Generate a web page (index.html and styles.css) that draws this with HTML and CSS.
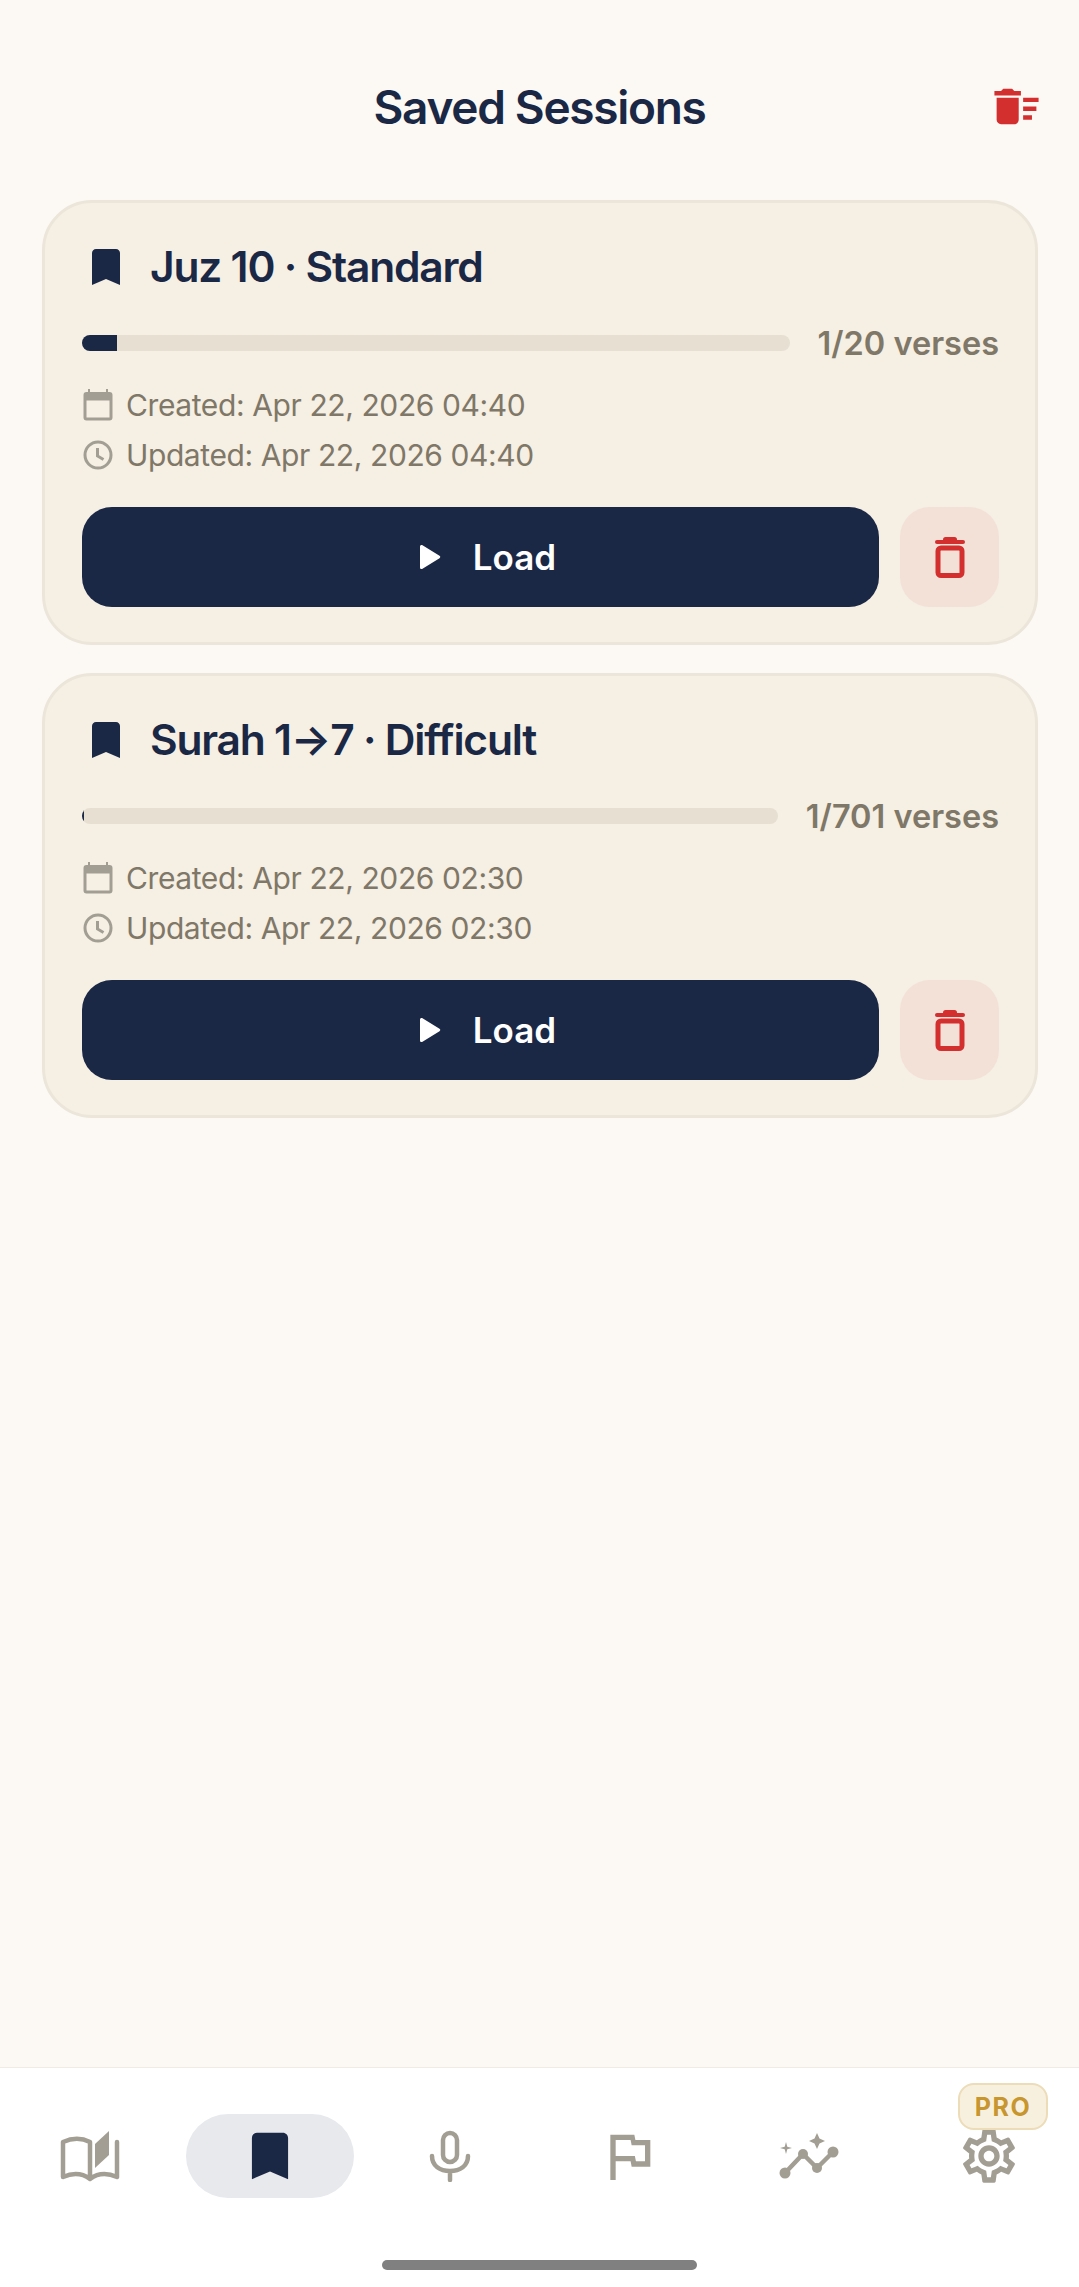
FILE: index.html
```html
<!DOCTYPE html>
<html lang="en">
<head>
    <meta charset="utf-8" />
    <meta name="viewport" content="width=device-width, initial-scale=1" />
    <title>Saved Sessions</title>
    <link rel="stylesheet" href="styles.css">
</head>
<body>
    <header class="top-bar">
        <span></span>
        <h1>Saved Sessions</h1>
        <button class="clear-btn" type="button" aria-label="Delete all">
            <svg width="53" height="53" viewBox="0 0 24 24"><path d="M15 16h4v2h-4zm0-8h7v2h-7zm0 4h6v2h-6zM3 18c0 1.1.9 2 2 2h6c1.1 0 2-.9 2-2V8H3v10zM14 5h-3l-1-1H6L5 5H2v2h12z"/></svg>
        </button>
    </header>

    <main class="session-list">
        <section class="card">
            <div class="card-title">
                <svg width="48" height="48" viewBox="0 0 24 24"><path d="M17 3H7c-1.1 0-2 .9-2 2v16l7-3 7 3V5c0-1.1-.9-2-2-2z"/></svg>
                <h2>Juz 10 · Standard</h2>
            </div>
            <div class="progress-row">
                <div class="progress"><div class="progress-fill" style="width: 5%"></div></div>
                <span class="progress-label">1/20 verses</span>
            </div>
            <div class="meta-row">
                <svg class="meta-icon" width="32" height="32" viewBox="0 0 32 32"><path class="cal" d="M6 0v3H4.500A3 3 0 0 0 1.500 6V28.500a3 3 0 0 0 3 3h23a3 3 0 0 0 3-3V6a3 3 0 0 0-3-3H26V0h-2v3H8V0zM4.500 11.500h23v17h-23z"/></svg>
                <span>Created: Apr 22, 2026 04:40</span>
            </div>
            <div class="meta-row">
                <svg class="meta-icon" width="32" height="32" viewBox="0 0 32 32"><circle class="clock" cx="16" cy="16" r="13"/><path class="clock" d="M15.500 9v8l6 3.500"/></svg>
                <span>Updated: Apr 22, 2026 04:40</span>
            </div>
            <div class="actions">
                <button class="load-btn" type="button">
                    <svg width="22" height="26" viewBox="0 0 22 26"><path d="M1 2.500C1 1 2.500.5 3.500 1.200L20.500 11.800C21.500 12.500 21.500 13.500 20.500 14.200L3.500 24.800C2.500 25.500 1 25 1 23.500z"/></svg>
                    <span>Load</span>
                </button>
                <button class="delete-btn" type="button" aria-label="Delete">
                    <svg width="32" height="42" viewBox="0 0 32 42">
                        <rect class="lid" x="9" y="1" width="14" height="5" rx="2.500"/>
                        <rect class="lid" x="1" y="4" width="30" height="4" rx="2"/>
                        <rect class="bin" x="4" y="12" width="24" height="27.500" rx="3"/>
                    </svg>
                </button>
            </div>
        </section>

        <section class="card">
            <div class="card-title">
                <svg width="48" height="48" viewBox="0 0 24 24"><path d="M17 3H7c-1.1 0-2 .9-2 2v16l7-3 7 3V5c0-1.1-.9-2-2-2z"/></svg>
                <h2>Surah 1→7 · Difficult</h2>
            </div>
            <div class="progress-row">
                <div class="progress"><div class="progress-fill" style="width: 0.3%"></div></div>
                <span class="progress-label">1/701 verses</span>
            </div>
            <div class="meta-row">
                <svg class="meta-icon" width="32" height="32" viewBox="0 0 32 32"><path class="cal" d="M6 0v3H4.500A3 3 0 0 0 1.500 6V28.500a3 3 0 0 0 3 3h23a3 3 0 0 0 3-3V6a3 3 0 0 0-3-3H26V0h-2v3H8V0zM4.500 11.500h23v17h-23z"/></svg>
                <span>Created: Apr 22, 2026 02:30</span>
            </div>
            <div class="meta-row">
                <svg class="meta-icon" width="32" height="32" viewBox="0 0 32 32"><circle class="clock" cx="16" cy="16" r="13"/><path class="clock" d="M15.500 9v8l6 3.500"/></svg>
                <span>Updated: Apr 22, 2026 02:30</span>
            </div>
            <div class="actions">
                <button class="load-btn" type="button">
                    <svg width="22" height="26" viewBox="0 0 22 26"><path d="M1 2.500C1 1 2.500.5 3.500 1.200L20.500 11.800C21.500 12.500 21.500 13.500 20.500 14.200L3.500 24.800C2.500 25.500 1 25 1 23.500z"/></svg>
                    <span>Load</span>
                </button>
                <button class="delete-btn" type="button" aria-label="Delete">
                    <svg width="32" height="42" viewBox="0 0 32 42">
                        <rect class="lid" x="9" y="1" width="14" height="5" rx="2.500"/>
                        <rect class="lid" x="1" y="4" width="30" height="4" rx="2"/>
                        <rect class="bin" x="4" y="12" width="24" height="27.500" rx="3"/>
                    </svg>
                </button>
            </div>
        </section>
    </main>

    <nav class="bottom-nav">
        <div class="nav-items">
            <div class="nav-item">
                <svg width="60" height="52" viewBox="0 0 60 52">
                    <path class="line" d="M30 49V12C22 8 12 8 3 12V47C12 43 22 43 30 49C38 43 48 43 57 47V12"/>
                    <path class="solid" d="M35 14L49 1V25L35 38z"/>
                </svg>
            </div>
            <div class="nav-item">
                <div class="nav-pill">
                    <svg width="62" height="62" viewBox="0 0 24 24"><path d="M17 3H7c-1.1 0-2 .9-2 2v16l7-3 7 3V5c0-1.1-.9-2-2-2z"/></svg>
                </div>
            </div>
            <div class="nav-item">
                <svg width="42" height="52" viewBox="0 0 42 52">
                    <rect class="line" x="14" y="3" width="14" height="29" rx="7"/>
                    <path class="line" d="M3 26C3 36 11 41 21 41S39 36 39 26M21 41V50"/>
                </svg>
            </div>
            <div class="nav-item">
                <svg width="64" height="64" viewBox="0 0 24 24"><path class="solid" d="M14.400 6L14 4H5v17h2v-7h5.600l.4 2h7V6h-5.600zm3.600 8h-3.400l-.4-2H7V6h5.600l.4 2H18v6z"/></svg>
            </div>
            <div class="nav-item">
                <svg width="60" height="50" viewBox="0 0 60 50">
                    <path class="line" d="M6 42L24 23L38 37L54 21"/>
                    <circle class="solid" cx="6" cy="42" r="5.500"/>
                    <circle class="solid" cx="24" cy="23" r="5"/>
                    <circle class="solid" cx="38" cy="37" r="5"/>
                    <circle class="solid" cx="54" cy="21" r="5.500"/>
                    <path class="solid" d="M38 2L40.500 7.500L46 10L40.500 12.500L38 18L35.500 12.500L30 10L35.500 7.500z"/>
                    <path class="solid" d="M7 11L8.300 15.700L13 17L8.300 18.300L7 23L5.700 18.300L1 17L5.700 15.700z"/>
                </svg>
            </div>
            <div class="nav-item">
                <svg width="64" height="64" viewBox="0 0 24 24"><path class="solid" d="M19.430 12.980c.04-.32.07-.64.07-.98 0-.34-.03-.66-.07-.98l2.110-1.650c.19-.15.24-.42.12-.64l-2-3.460c-.09-.16-.26-.25-.44-.25-.06 0-.12.01-.17.03l-2.490 1c-.52-.4-1.080-.73-1.690-.98l-.38-2.650C14.460 2.180 14.250 2 14 2h-4c-.25 0-.46.18-.49.42l-.38 2.650c-.61.25-1.170.59-1.690.98l-2.490-1c-.06-.02-.12-.03-.18-.03-.17 0-.34.09-.43.25l-2 3.460c-.13.22-.07.49.12.64l2.110 1.650c-.04.32-.07.65-.07.98 0 .33.03.66.07.98l-2.110 1.650c-.19.15-.24.42-.12.64l2 3.460c.09.16.26.25.44.25.06 0 .12-.01.17-.03l2.490-1c.52.4 1.080.73 1.690.98l.38 2.650c.03.24.24.42.49.42h4c.25 0 .46-.18.49-.42l.38-2.650c.61-.25 1.170-.59 1.690-.98l2.490 1c.06.02.12.03.18.03.17 0 .34-.09.43-.25l2-3.460c.12-.22.07-.49-.12-.64l-2.110-1.650zm-1.980-1.710c.04.31.05.52.05.73 0 .21-.02.43-.05.73l-.14 1.130.89.7 1.080.84-.7 1.210-1.270-.51-1.040-.42-.9.68c-.43.32-.84.56-1.250.73l-1.060.43-.16 1.130-.2 1.350h-1.400l-.19-1.350-.16-1.130-1.060-.43c-.43-.18-.83-.41-1.230-.71l-.91-.7-1.060.43-1.270.51-.7-1.210 1.080-.84.89-.7-.14-1.130c-.03-.31-.05-.54-.05-.74s.02-.43.05-.73l.14-1.130-.89-.7-1.080-.84.7-1.210 1.270.51 1.040.42.9-.68c.43-.32.84-.56 1.250-.73l1.060-.43.16-1.130.2-1.350h1.390l.19 1.350.16 1.130 1.060.43c.43.18.83.41 1.230.71l.91.7 1.060-.43 1.270-.51.7 1.210-1.070.85-.89.7.14 1.130zM12 8c-2.210 0-4 1.790-4 4s1.790 4 4 4 4-1.790 4-4-1.790-4-4-4zm0 6c-1.100 0-2-.9-2-2s.9-2 2-2 2 .9 2 2-.9 2-2 2z"/></svg>
                <span class="pro-badge">PRO</span>
            </div>
        </div>
        <div class="home-bar"></div>
    </nav>
</body>
</html>
```

FILE: styles.css
```css
* {
    box-sizing: border-box;
}

body {
    font-family: 'Inter', 'Liberation Sans', sans-serif;
    background-color: #fcf9f4;
    color: #1b2845;
    margin: 0;
    height: 2287px;
    display: flex;
    flex-direction: column;
}

h1,
h2 {
    margin: 0;
    font-weight: 600;
}

button {
    border: none;
    font-family: inherit;
    padding: 0;
}

.top-bar {
    height: 200px;
    padding: 13px 36px 0;
    display: grid;
    grid-template-columns: 1fr auto 1fr;
    align-items: center;
}

.top-bar h1 {
    font-size: 46px;
    line-height: 54px;
    letter-spacing: -1.3px;
}

.clear-btn {
    justify-self: end;
    background: none;
    height: 53px;
}

.clear-btn svg {
    fill: #d32f2f;
    display: block;
}

.session-list {
    flex: 1;
    padding: 0 41px 0 42px;
    display: flex;
    flex-direction: column;
    gap: 28px;
}

.card {
    background-color: #f5efe4;
    border: 3px solid #ebe5da;
    border-radius: 50px;
    padding: 37px 36px 35px 37px;
}

.card-title {
    height: 54px;
    display: flex;
    align-items: center;
    gap: 20px;
}

.card-title svg {
    fill: #1b2845;
    flex-shrink: 0;
}

.card-title h2 {
    font-size: 42.5px;
    line-height: 54px;
    letter-spacing: -1.2px;
}

.progress-row {
    height: 40px;
    margin-top: 29px;
    margin-bottom: 17px;
    display: flex;
    align-items: center;
    gap: 28px;
}

.progress {
    flex: 1;
    height: 16px;
    background-color: #e6dfd2;
    border-radius: 8px;
    overflow: hidden;
}

.progress-fill {
    height: 100%;
    background-color: #1b2845;
}

.progress-label {
    font-size: 32.5px;
    font-weight: 600;
    color: #7f7767;
    white-space: nowrap;
}

.meta-row {
    height: 50px;
    display: flex;
    align-items: center;
    gap: 12px;
    font-size: 30px;
    letter-spacing: -0.4px;
    color: #7f7767;
}

.meta-icon {
    flex-shrink: 0;
}

.cal {
    fill: #a39e93;
    fill-rule: evenodd;
}

.clock {
    fill: none;
    stroke: #a39e93;
    stroke-width: 3;
}

.actions {
    margin-top: 27px;
    height: 100px;
    display: flex;
    gap: 21px;
}

.load-btn {
    flex: 1;
    background-color: #1b2845;
    color: #fff;
    border-radius: 30px;
    font-size: 35px;
    font-weight: 600;
    padding-left: 14px;
    display: flex;
    align-items: center;
    justify-content: center;
    gap: 32px;
}

.load-btn svg {
    fill: #fff;
}

.delete-btn {
    width: 99px;
    background-color: #f3e1d7;
    border-radius: 30px;
    display: flex;
    align-items: center;
    justify-content: center;
}

.lid {
    fill: #d32f2f;
}

.bin {
    fill: none;
    stroke: #d32f2f;
    stroke-width: 5;
}

.bottom-nav {
    height: 220px;
    background-color: #fff;
    border-top: 1px solid #f0ebe4;
    padding-top: 46px;
}

.nav-items {
    height: 84px;
    display: flex;
}

.nav-item {
    flex: 1;
    position: relative;
    display: flex;
    align-items: center;
    justify-content: center;
}

.nav-pill {
    width: 168px;
    height: 84px;
    background-color: #e8e9ed;
    border-radius: 42px;
    display: flex;
    align-items: center;
    justify-content: center;
}

.nav-pill svg {
    fill: #1b2845;
}

.line {
    fill: none;
    stroke: #a39e93;
    stroke-width: 4.5;
    stroke-linecap: round;
    stroke-linejoin: round;
}

.solid {
    fill: #a39e93;
}

.pro-badge {
    position: absolute;
    top: -31px;
    right: 31px;
    width: 90px;
    height: 47px;
    background-color: #f8f0df;
    border: 2px solid #ecdcb8;
    border-radius: 16px;
    color: #c8962f;
    font-size: 25px;
    font-weight: 700;
    letter-spacing: 1.5px;
    display: flex;
    align-items: center;
    justify-content: center;
}

.home-bar {
    width: 315px;
    height: 10px;
    background-color: #808080;
    border-radius: 5px;
    margin: 62px auto 0;
}
```
